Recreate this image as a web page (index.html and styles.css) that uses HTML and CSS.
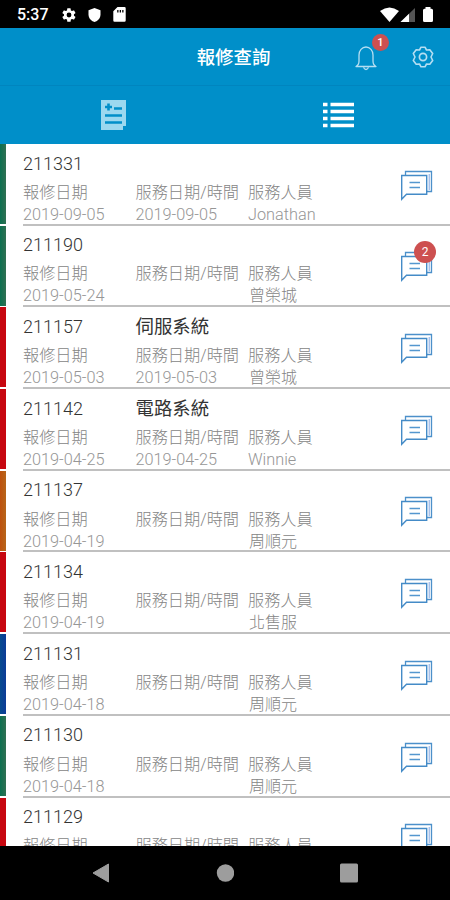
FILE: index.html
```
<!DOCTYPE html>
<html lang="zh-Hant">
<head>
<meta charset="utf-8">
<title>報修查詢</title>
<link rel="stylesheet" href="styles.css">
</head>
<body>
<svg class="defs" aria-hidden="true">
  <symbol id="chat" viewBox="0 0 34 32">
    <path d="M5.500 5V1.500H31.500V21.500H27" fill="none" stroke="#4c90ca" stroke-width="1.300"/>
    <path d="M29.300 4V20" stroke="#a9c2ec" stroke-width="1.500"/>
    <path d="M1.700 5.500H26.700V24.300H6.500L1.700 29.300Z" fill="#fff" stroke="#448bc7" stroke-width="1.400"/>
    <path d="M9.500 12.500H20M9.500 17.500H20" stroke="#5497cf" stroke-width="1.300"/>
  </symbol>
</svg>
<div class="screen">
  <div class="status">
    <span class="time">5:37</span>
    <svg class="s-gear" viewBox="0 0 24 24"><path fill="#fff" fill-rule="evenodd" d="M19.400 13a7.500 7.500 0 0 0 0-2l2.100-1.600a.5.5 0 0 0 .1-.6l-2-3.500a.5.5 0 0 0-.6-.2l-2.500 1a7.300 7.300 0 0 0-1.700-1L14.400 2.400a.5.5 0 0 0-.5-.4h-4a.5.5 0 0 0-.5.4L9 5.100a7.700 7.700 0 0 0-1.700 1l-2.500-1a.5.5 0 0 0-.6.200l-2 3.500a.5.5 0 0 0 .1.600L4.500 11a7.500 7.500 0 0 0 0 2l-2.200 1.600a.5.5 0 0 0-.1.600l2 3.500c.1.200.4.300.6.200l2.500-1a7.300 7.300 0 0 0 1.700 1l.4 2.700c0 .2.200.4.500.4h4c.3 0 .5-.2.5-.4l.4-2.700a7.700 7.700 0 0 0 1.700-1l2.500 1c.2.100.5 0 .6-.2l2-3.500a.5.500 0 0 0-.1-.6zM12 15.600a3.600 3.600 0 1 1 0-7.200 3.600 3.600 0 0 1 0 7.200z"/></svg>
    <svg class="s-shield" viewBox="0 0 13 14"><path fill="#fff" d="M6.500 0 12.500 2.300V6.500C12.500 10 10 13 6.500 14 3 13 .5 10 .5 6.500V2.300Z"/></svg>
    <svg class="s-card" viewBox="0 0 13 15"><path fill="#fff" fill-rule="evenodd" d="M4.500 0H11.500Q12.700 0 12.700 1.200V13.500Q12.700 14.700 11.500 14.700H1.500Q.3 14.700 .3 13.500V4.300ZM4.200 3V5.500H5.500V3ZM6.700 3V5.500H8V3ZM9.200 3V5.500H10.500V3Z"/></svg>
    <svg class="s-right" viewBox="0 0 54 16">
      <path fill="#fff" d="M0 4Q9.500-3.200 19 4L9.500 15Z"/>
      <path fill="#555" d="M35 1V15H20.500Z"/><path fill="#fff" d="M29 6.800V15H20.500Z"/>
      <path fill="#fff" d="M45.500 0H50.500V1.700H51.500Q53 1.700 53 3.200V13.500Q53 15 51.500 15H44.500Q43 15 43 13.500V3.200Q43 1.700 44.500 1.700H45.500Z"/>
    </svg>
  </div>
  <header class="bar">
    <h1>報修查詢</h1>
    <div class="actions">
      <div class="bell">
        <svg viewBox="0 0 22 26"><path d="M1 21.500Q4 20 4 16V10C4 5.500 7 2 11 2S18 5.500 18 10V16Q18 20 21 21.500ZM8.500 22.500Q11 26.500 13.500 22.500" fill="none" stroke="#b5def2" stroke-width="1.300" stroke-linejoin="round"/></svg>
        <span class="badge small">1</span>
      </div>
      <svg class="gear" viewBox="0 0 22 22"><path d="M9 1.200H13L14.500 4 17.800 3.700 20.700 7.500 19 11 20.700 14.500 17.800 18.300 14.500 18 13 20.800H9L7.500 18 4.200 18.300 1.300 14.500 3 11 1.300 7.500 4.200 3.700 7.500 4Z" fill="none" stroke="#b5def2" stroke-width="1.600" stroke-linejoin="round"/><circle cx="11" cy="11" r="3.600" fill="none" stroke="#b5def2" stroke-width="1.700"/></svg>
    </div>
  </header>
  <nav class="tabs">
    <div class="tab"><svg class="t-form" viewBox="0 0 25 30"><path fill="#9bd8ef" d="M0 0H25V26H22V30H0Z"/><path d="M4 7H11M7.500 3.500V10.500M13 8.500H21M4 15.500H21M4 22.500H21" stroke="#008fc9" stroke-width="2.600"/></svg></div>
    <div class="tab"><svg class="t-list" viewBox="0 0 31 26"><path d="M0 2.500H4.500M7.500 2.500H31M0 9.500H4.500M7.500 9.500H31M0 16.500H4.500M7.500 16.500H31M0 23.500H4.500M7.500 23.500H31" stroke="#fff" stroke-width="3.700"/></svg></div>
  </nav>
  <main class="list">
    <article class="row green"><div class="info"><b>211331</b><strong></strong><span>報修日期</span><span>服務日期/時間</span><span>服務人員</span><i>2019-09-05</i><i>2019-09-05</i><i>Jonathan</i></div><div class="chat"><svg><use href="#chat"/></svg></div></article>
    <article class="row green"><div class="info"><b>211190</b><strong></strong><span>報修日期</span><span>服務日期/時間</span><span>服務人員</span><i>2019-05-24</i><i></i><i class="zh">曾榮城</i></div><div class="chat"><svg><use href="#chat"/></svg><span class="badge">2</span></div></article>
    <article class="row red"><div class="info"><b>211157</b><strong>伺服系統</strong><span>報修日期</span><span>服務日期/時間</span><span>服務人員</span><i>2019-05-03</i><i>2019-05-03</i><i class="zh">曾榮城</i></div><div class="chat"><svg><use href="#chat"/></svg></div></article>
    <article class="row red"><div class="info"><b>211142</b><strong>電路系統</strong><span>報修日期</span><span>服務日期/時間</span><span>服務人員</span><i>2019-04-25</i><i>2019-04-25</i><i>Winnie</i></div><div class="chat"><svg><use href="#chat"/></svg></div></article>
    <article class="row orange"><div class="info"><b>211137</b><strong></strong><span>報修日期</span><span>服務日期/時間</span><span>服務人員</span><i>2019-04-19</i><i></i><i class="zh">周順元</i></div><div class="chat"><svg><use href="#chat"/></svg></div></article>
    <article class="row red"><div class="info"><b>211134</b><strong></strong><span>報修日期</span><span>服務日期/時間</span><span>服務人員</span><i>2019-04-19</i><i></i><i class="zh">北售服</i></div><div class="chat"><svg><use href="#chat"/></svg></div></article>
    <article class="row blue"><div class="info"><b>211131</b><strong></strong><span>報修日期</span><span>服務日期/時間</span><span>服務人員</span><i>2019-04-18</i><i></i><i class="zh">周順元</i></div><div class="chat"><svg><use href="#chat"/></svg></div></article>
    <article class="row green"><div class="info"><b>211130</b><strong></strong><span>報修日期</span><span>服務日期/時間</span><span>服務人員</span><i>2019-04-18</i><i></i><i class="zh">周順元</i></div><div class="chat"><svg><use href="#chat"/></svg></div></article>
    <article class="row red"><div class="info"><b>211129</b><strong></strong><span>報修日期</span><span>服務日期/時間</span><span>服務人員</span></div><div class="chat"><svg><use href="#chat"/></svg></div></article>
  </main>
  <footer class="navbar">
    <svg viewBox="0 0 18 20"><path d="M16.500 1V19L1 10Z" fill="#9d9d9d" stroke="#9d9d9d" stroke-linejoin="round"/></svg>
    <svg viewBox="0 0 18 20"><circle cx="9.500" cy="10" r="8.700" fill="#9d9d9d"/></svg>
    <svg viewBox="0 0 18 20"><rect y=".5" width="18" height="19" rx="1.500" fill="#9d9d9d"/></svg>
  </footer>
</div>
</body>
</html>
```
FILE: styles.css
```
* { box-sizing: border-box; }
body { margin: 0; background: #000; font-family: Roboto, "Noto Sans CJK TC", sans-serif; }
.defs { position: absolute; width: 0; height: 0; }
.screen { width: 450px; height: 900px; display: flex; flex-direction: column; overflow: hidden; }
svg { display: block; flex: none; }

.status { height: 28px; flex: none; display: flex; align-items: center; padding: 1px 16px 0 17px; background: #000; }
.time { width: 44px; color: #fff; font-size: 16px; font-weight: 500; line-height: 28px; }
.s-gear { width: 16px; height: 16px; }
.s-shield { width: 13px; height: 14px; margin-left: 11px; }
.s-card { width: 13px; height: 15px; margin-left: 12px; }
.s-right { width: 54px; height: 16px; margin-left: auto; }

.bar { height: 58px; flex: none; display: grid; grid-template-columns: 1fr auto 1fr; align-items: center; background: #008fc9; border-bottom: 1px solid #0085bf; padding: 0 16px 0 33px; }
.bar h1 { grid-column: 2; margin: 0; padding-top: 1px; color: #fff; font-size: 18.400px; font-weight: 500; line-height: 57px; }
.actions { display: flex; justify-content: flex-end; align-items: center; gap: 35px; }
.bell { position: relative; }
.bell svg { width: 22px; height: 26px; margin-top: 2px; }
.gear { width: 22px; height: 22px; }
.badge { position: absolute; display: flex; align-items: center; justify-content: center; width: 22px; height: 22px; top: 15px; right: 14px; border-radius: 50%; background: #cd5050; color: #fff; font-size: 12px; }
.badge.small { width: 17px; height: 17px; top: -9px; right: -12px; font-size: 11px; font-weight: 500; }

.tabs { height: 58px; flex: none; display: grid; grid-template-columns: 1fr 1fr; background: #008fc9; }
.tab { display: grid; place-items: center; }
.t-form { width: 25px; height: 30px; margin-left: 1px; }
.t-list { width: 31px; height: 26px; margin-left: 1px; }

.list { flex: 1; min-height: 0; overflow: hidden; background: #fff; }
.row { height: 81.700px; display: flex; background: #fff; }
.row::before { content: ""; width: 6px; height: 80px; flex: none; background: var(--mark); }
.green { --mark: linear-gradient(90deg, #0b7050, #307052); }
.red { --mark: #c70710; }
.orange { --mark: linear-gradient(90deg, #bd510d, #b7651a); }
.blue { --mark: linear-gradient(90deg, #064b8e, #0c3b97); }
.info { flex: 1; margin-left: 17px; display: grid; grid-template-columns: 112.500px 112.500px 1fr; grid-template-rows: 23px 22px 21.200px; padding-top: 7.500px; border-bottom: 2px solid #c0c0c0; color: #999; white-space: nowrap; }
.info b { font-size: 18px; font-weight: 300; line-height: 23px; color: #333; }
.info strong { grid-column: 2 / 4; font-size: 18.400px; font-weight: 400; line-height: 23px; color: #333; }
.info span { font-size: 16.200px; font-weight: 300; line-height: 22px; color: #858585; margin-top: 7.300px; }
.info i { font-size: 16.300px; font-weight: 300; font-style: normal; line-height: 22px; color: #969696; margin-top: 7.300px; }
.info .zh { font-size: 16px; padding-left: 1px; color: #858585; }
.chat { position: relative; width: 50px; flex: none; border-bottom: 2px solid #c0c0c0; }
.chat svg { width: 34px; height: 32px; margin-top: 25.700px; }

.navbar { height: 54px; flex: none; display: flex; justify-content: space-between; align-items: center; background: #000; padding: 0 92px; }
.navbar svg { width: 18px; height: 20px; }
```
